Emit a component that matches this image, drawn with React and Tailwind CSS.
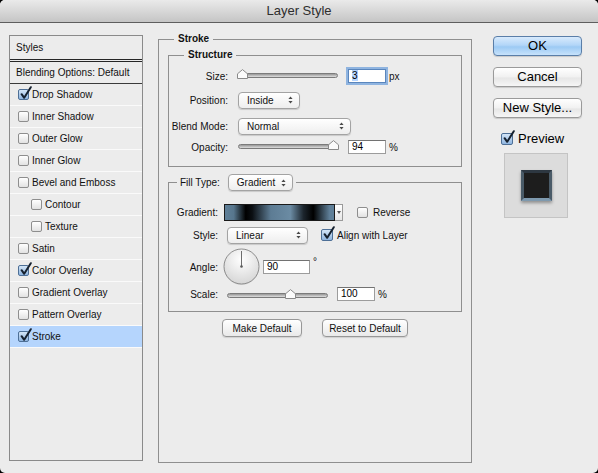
import React from "react";

const effects = [
  { name: "Drop Shadow", on: true },
  { name: "Inner Shadow" },
  { name: "Outer Glow" },
  { name: "Inner Glow" },
  { name: "Bevel and Emboss" },
  { name: "Contour", sub: true },
  { name: "Texture", sub: true },
  { name: "Satin" },
  { name: "Color Overlay", on: true },
  { name: "Gradient Overlay" },
  { name: "Pattern Overlay" },
  { name: "Stroke", on: true, active: true },
];

function Checkbox({ on, big }) {
  const box = big ? "w-[12px] h-[12px]" : "w-[11px] h-[11px]";
  const skin = on
    ? "border-[#4d6f96] bg-[linear-gradient(#d3e5f7,#8fb5e0)]"
    : "border-[#8e8e8e] bg-[linear-gradient(#ffffff,#e2e2e2)]";
  return (
    <span className={`relative block shrink-0 rounded-[2px] border ${box} ${skin}`}>
      {on && (
        <svg className="absolute left-[1px] -top-[4px]" width="12" height="14" viewBox="0 0 12 14">
          <path d="M1.6 8.2 L4.2 11.8 L10.8 1.2" fill="none" stroke="#16212f" strokeWidth="2" strokeLinecap="round" strokeLinejoin="round" />
        </svg>
      )}
    </span>
  );
}

function Slider({ className, pos }) {
  // pos is 0..1 along the track
  return (
    <div className={`relative h-[10px] mb-[4px] shrink-0 ${className}`}>
      <div className="mt-[4px] h-[5px] rounded-full border border-[#7b7b7b] bg-[linear-gradient(#979797,#dedede)]" />
      <svg
        className="absolute top-0"
        style={{ left: `calc(${pos} * (100% - 11px))` }}
        width="11"
        height="10"
        viewBox="0 0 11 10"
      >
        <path d="M0.5 9.5 V4.8 L5.5 0.6 L10.5 4.8 V9.5 Z" fill="#fbfbfb" stroke="#8a8a8a" strokeLinejoin="round" />
      </svg>
    </div>
  );
}

function Field({ value, className, focused }) {
  const ring = focused
    ? "border-[#5a86bd] shadow-[0_0_0_2px_#8fb4e0]"
    : "border-[#9c9c9c] border-t-[#727272]";
  return (
    <div className={`h-[14px] shrink-0 bg-white border pl-[3px] text-[10px] leading-[12px] text-black ${ring} ${className}`}>
      {focused ? <span className="bg-[#b5d5ff]">{value}</span> : value}
    </div>
  );
}

function Popup({ label, className }) {
  return (
    <div className={`h-[17px] shrink-0 flex items-center justify-between rounded-[4px] border border-[#a3a3a3] bg-[linear-gradient(#ffffff,#eeeeee)] shadow-[0_1px_1px_rgba(0,0,0,0.15)] pl-[8px] pr-[6px] text-[10px] ${className}`}>
      <span>{label}</span>
      <svg width="5" height="8" viewBox="0 0 5 8">
        <path d="M2.5 0.5 L4.6 3 H0.4 Z M2.5 7.5 L4.6 5 H0.4 Z" fill="#4a4a4a" />
      </svg>
    </div>
  );
}

function PushButton({ children, className }) {
  return (
    <div className={`h-[18px] flex items-center justify-center rounded-[4px] border border-[#979797] bg-[linear-gradient(#ffffff,#e9e9e9)] shadow-[0_1px_1px_rgba(0,0,0,0.12)] text-[10px] ${className}`}>
      {children}
    </div>
  );
}

function DialogButton({ children, primary, className }) {
  const skin = primary
    ? "border-[#5a7ea8] bg-[linear-gradient(#d8eafc,#b3d6f8_45%,#9ccaf4_55%,#c7e2fb)]"
    : "border-[#9a9a9a] bg-[linear-gradient(#ffffff,#f1f1f1_50%,#e6e6e6_55%,#f6f6f6)]";
  return (
    <div className={`h-[20px] w-[89px] flex items-center justify-center rounded-[4px] border shadow-[0_1px_1px_rgba(0,0,0,0.15)] text-[13px] text-black ${skin} ${className}`}>
      {children}
    </div>
  );
}

function AngleDial() {
  return (
    <svg width="37" height="38" viewBox="0 0 37 38" className="block shrink-0">
      <defs>
        <radialGradient id="dialFace" cx="50%" cy="30%" r="70%">
          <stop offset="0" stopColor="#ffffff" />
          <stop offset="1" stopColor="#d6d6d6" />
        </radialGradient>
      </defs>
      <circle cx="18.5" cy="19.5" r="17.5" fill="rgba(0,0,0,0.08)" />
      <circle cx="18.5" cy="18.5" r="17.5" fill="url(#dialFace)" stroke="#8d8d8d" />
      <line x1="18.5" y1="18.5" x2="18.5" y2="3" stroke="#6e6e6e" />
      <circle cx="18.5" cy="18.5" r="1.3" fill="#5a5a5a" />
    </svg>
  );
}

function StylesList() {
  return (
    <div className="mt-[12px] w-[134px] h-[426px] shrink-0 border border-[#8a8a8a] bg-[#ececec] text-[10px] text-[#111]">
      <div className="h-[26px] pl-[6px] flex items-center border-b-[3px] border-double border-[#262626]">Styles</div>
      <div className="h-[22px] pl-[6px] flex items-center border-b border-[#3a3a3a]">Blending Options: Default</div>
      {effects.map((fx) => (
        <div
          key={fx.name}
          className={`h-[22px] flex items-center gap-[3px] border-b border-[#fafafa] ${fx.sub ? "pl-[21px]" : "pl-[8px]"} ${fx.active ? "bg-[#b5d5fd]" : ""}`}
        >
          <Checkbox on={fx.on} />
          <span>{fx.name}</span>
        </div>
      ))}
    </div>
  );
}

function StrokePanel() {
  return (
    <div className="flex flex-col shrink-0">
      <fieldset className="mt-[9px] ml-[15px] w-[314px] h-[431px] border border-[#8f8f8f] text-[10px] text-[#111]">
        <legend className="ml-[15px] px-[4px] h-[14px] leading-[14px] font-bold">Stroke</legend>
        <div className="px-[9px]">
          <fieldset className="mt-[2px] border border-[#8f8f8f]">
            <legend className="ml-[15px] px-[4px] h-[14px] leading-[14px] font-bold">Structure</legend>
            <div className="pt-[4px] pb-[10px]">
              <div className="h-[20px] flex items-center">
                <span className="w-[59px] text-right">Size:</span>
                <Slider className="ml-[9px] w-[101px]" pos={0} />
                <Field className="ml-[10px] w-[38px]" value="3" focused />
                <span className="ml-[3px]">px</span>
              </div>
              <div className="h-[28px] flex items-center">
                <span className="w-[59px] text-right">Position:</span>
                <Popup className="ml-[10px] w-[62px]" label="Inside" />
              </div>
              <div className="h-[24px] flex items-center">
                <span className="w-[59px] text-right">Blend Mode:</span>
                <Popup className="ml-[10px] w-[113px]" label="Normal" />
              </div>
              <div className="h-[18px] flex items-center">
                <span className="w-[59px] text-right">Opacity:</span>
                <Slider className="ml-[10px] w-[101px]" pos={1} />
                <Field className="ml-[9px] w-[38px]" value="94" />
                <span className="ml-[3px]">%</span>
              </div>
            </div>
          </fieldset>

          <fieldset className="mt-[7px] border border-[#8f8f8f]">
            <legend className="ml-[8px] px-[3px] h-[17px] flex items-center">
              <span>Fill Type:</span>
              <Popup className="ml-[8px] w-[65px]" label="Gradient" />
            </legend>
            <div className="pt-[10px] pb-[10px]">
              <div className="h-[22px] flex items-center">
                <span className="w-[49px] text-right">Gradient:</span>
                <div className="ml-[6px] w-[111px] h-[17px] border border-[#1a1a1a] bg-[linear-gradient(90deg,#5f7f98_0%,#57768d_8%,#000000_19%,#0b0f13_25%,#5d7c94_42%,#6b8ba3_60%,#1c252d_72%,#000000_81%,#5f7f98_96%)]" />
                <div className="w-[8px] h-[17px] border border-l-0 border-[#9a9a9a] bg-[linear-gradient(#ffffff,#e6e6e6)] flex items-center justify-center">
                  <svg width="4" height="3" viewBox="0 0 4 3">
                    <path d="M0 0 H4 L2 3 Z" fill="#555" />
                  </svg>
                </div>
                <span className="ml-[14px]"><Checkbox /></span>
                <span className="ml-[5px]">Reverse</span>
              </div>
              <div className="h-[24px] flex items-center">
                <span className="w-[49px] text-right">Style:</span>
                <Popup className="ml-[9px] w-[81px]" label="Linear" />
                <span className="ml-[13px]"><Checkbox on big /></span>
                <span className="ml-[4px]">Align with Layer</span>
              </div>
              <div className="h-[40px] flex items-center">
                <span className="w-[49px] text-right">Angle:</span>
                <span className="ml-[5px]"><AngleDial /></span>
                <Field className="ml-[3px] w-[47px]" value="90" />
                <span className="ml-[3px] self-start mt-[10px] leading-none">°</span>
              </div>
              <div className="h-[14px] flex items-center">
                <span className="w-[49px] text-right">Scale:</span>
                <Slider className="ml-[9px] w-[101px] mt-[4px]" pos={0.64} />
                <Field className="ml-[9px] w-[38px]" value="100" />
                <span className="ml-[3px]">%</span>
              </div>
            </div>
          </fieldset>

          <div className="mt-[7px] flex justify-center gap-[20px]">
            <PushButton className="w-[80px]">Make Default</PushButton>
            <PushButton className="w-[86px]">Reset to Default</PushButton>
          </div>
        </div>
      </fieldset>
    </div>
  );
}

function ActionColumn() {
  return (
    <div className="ml-[21px] mt-[13px] w-[89px] flex flex-col shrink-0">
      <DialogButton primary>OK</DialogButton>
      <DialogButton className="mt-[11px]">Cancel</DialogButton>
      <DialogButton className="mt-[11px]">New Style...</DialogButton>
      <div className="mt-[13px] h-[16px] pl-[8px] flex items-center gap-[5px] text-[13px] text-black">
        <Checkbox on big />
        <span>Preview</span>
      </div>
      <div className="mt-[6px] ml-[11px] w-[64px] h-[65px] border border-[#c4c4c4] bg-[#dcdcdc] flex items-center justify-center">
        <div className="w-[31px] h-[31px] border-[3px] border-t-[#2d3741] border-x-[#4a5b68] border-b-[#7e99ae] bg-[#1d1d1d] shadow-[0_2px_3px_rgba(0,0,0,0.35)]" />
      </div>
    </div>
  );
}

export default function App() {
  return (
    <div className="w-[598px] h-[473px] bg-black font-['Liberation_Sans',Arial,sans-serif]">
      <div className="w-full h-full rounded-[5px] overflow-hidden bg-[#ececec] flex flex-col">
        <div className="h-[23px] shrink-0 border-b border-[#5e5e5e] bg-[linear-gradient(#eaeaea,#c5c5c5)] text-center text-[13px] leading-[22px] text-[#2e2e2e]">
          Layer Style
        </div>
        <div className="flex items-start pl-[9px]">
          <StylesList />
          <StrokePanel />
          <ActionColumn />
        </div>
      </div>
    </div>
  );
}
